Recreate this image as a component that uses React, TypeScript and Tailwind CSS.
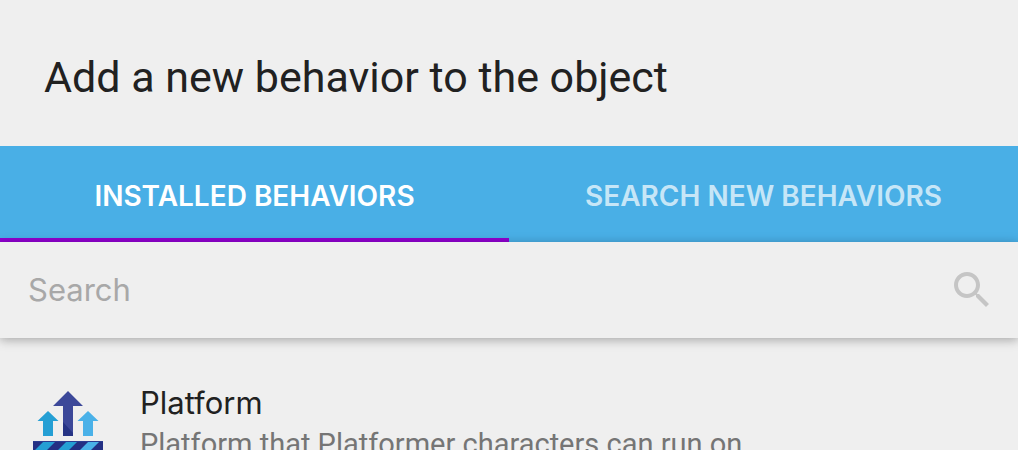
import { useState } from "react";

const tabs = ["Installed behaviors", "Search new behaviors"];

function SearchIcon() {
  return (
    <svg viewBox="0 0 24 24" className="size-12 fill-[#c5c5c5]" aria-hidden="true">
      <path d="M15.5 14h-.79l-.28-.27C15.41 12.59 16 11.11 16 9.5 16 5.91 13.09 3 9.5 3S3 5.91 3 9.5 5.91 16 9.5 16c1.61 0 3.09-.59 4.23-1.57l.27.28v.79l5 4.99L20.49 19l-4.99-5zm-6 0C7.01 14 5 11.99 5 9.5S7.01 5 9.5 5 14 7.01 14 9.5 11.99 14 9.5 14z" />
    </svg>
  );
}

function PlatformIcon() {
  return (
    <svg viewBox="0 0 80 80" className="size-20 shrink-0" aria-hidden="true">
      <defs>
        <clipPath id="ground">
          <rect x="5" y="55" width="70" height="20" />
        </clipPath>
      </defs>
      <path d="M40 5 55 20H45V50H35V20H25Z" fill="#3c4899" />
      <path d="M35 36 45 47V50H35Z" fill="#263485" />
      <path d="M20 25 30.500 35H25V50H15V35H9.500Z" fill="#259fd4" />
      <path d="M60 25 70.500 35H65V50H55V35H49.500Z" fill="#4ab1e8" />
      <g clipPath="url(#ground)">
        <rect x="5" y="55" width="70" height="20" fill="#243084" />
        <path d="M16 55H28L8 75H-4ZM39 55H50L30 75H19Z" fill="#259fd4" />
        <path d="M61 55H72L52 75H41ZM84 55H95L75 75H64Z" fill="#4ab1e8" />
        <rect x="5" y="55" width="70" height="1" fill="#2b3c91" />
      </g>
    </svg>
  );
}

export default function App() {
  const [active, setActive] = useState(0);
  return (
    <main className="h-screen overflow-hidden bg-[#efefef] font-['Inter',sans-serif] text-[#212121]">
      <h1 className="px-11 pt-12 pb-10 font-['Roboto',sans-serif] text-[43px] leading-[58px]">
        Add a new behavior to the object
      </h1>
      <div role="tablist" className="flex bg-[#49afe6]">
        {tabs.map((label, i) => (
          <button
            key={label}
            role="tab"
            aria-selected={active === i}
            onClick={() => setActive(i)}
            className={`h-24 flex-1 border-b-4 pt-2 text-[28px] font-semibold uppercase ${
              active === i ? "border-[#9000d0] text-white" : "border-transparent text-white/70"
            }`}
          >
            {label}
          </button>
        ))}
      </div>
      <div className="relative flex h-24 items-center bg-[#efefef] pr-[22px] pl-7 shadow-[0_2px_12px_rgba(0,0,0,0.16),0_2px_8px_rgba(0,0,0,0.16)]">
        <input
          type="search"
          aria-label="Search"
          placeholder="Search"
          className="min-w-0 flex-1 bg-transparent text-[31px] outline-none placeholder:text-[#a8a8a8]"
        />
        <button aria-label="Search">
          <SearchIcon />
        </button>
      </div>
      <ul>
        <li className="flex gap-8 px-7 pt-12">
          <PlatformIcon />
          <div className="whitespace-nowrap">
            <h2 className="text-[31px] leading-[34px]">Platform</h2>
            <p className="font-['Roboto',sans-serif] text-[29px] leading-[48px] text-[#757575]">
              Platform that Platformer characters can run on
            </p>
          </div>
        </li>
      </ul>
    </main>
  );
}
